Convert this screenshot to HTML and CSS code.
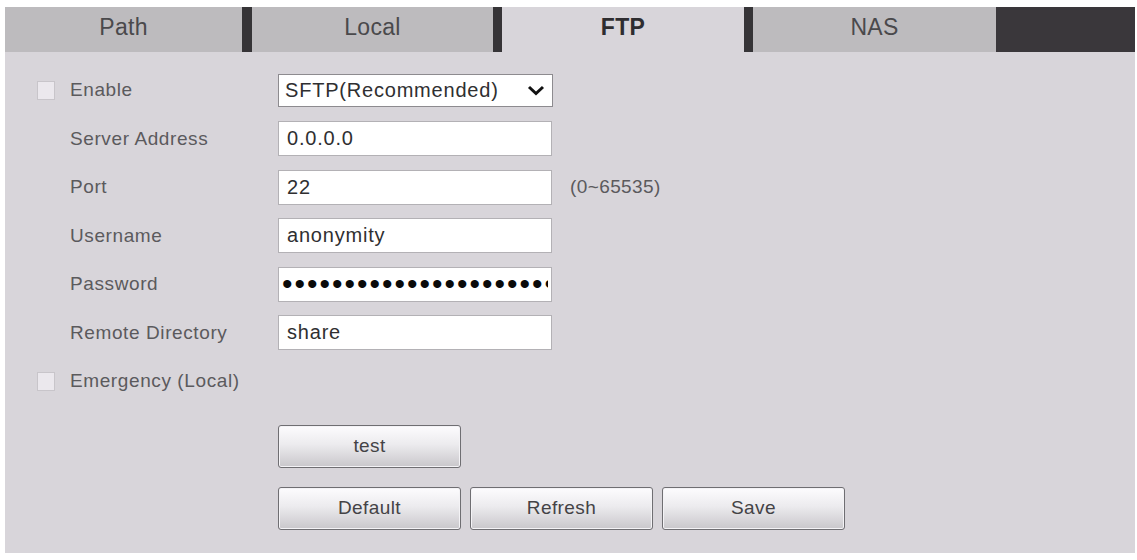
FILE: index.html
```html
<!DOCTYPE html>
<html>
<head>
<meta charset="utf-8">
<link rel="stylesheet" href="styles.css">
</head>
<body>
<div class="panel">
  <div class="tabs">
    <div class="tab tab-path">Path</div>
    <div class="tab tab-local">Local</div>
    <div class="tab tab-ftp active">FTP</div>
    <div class="tab tab-nas">NAS</div>
    <div class="tab-fill"></div>
  </div>
  <div class="form">
    <div class="row">
      <span class="cb"></span>
      <span class="label">Enable</span>
      <div class="select-wrap">
        <select class="field select"><option>SFTP(Recommended)</option></select>
        <svg class="chev" width="18" height="11" viewBox="0 0 18 11"><path d="M2 2 L9 8.5 L16 2" fill="none" stroke="#111" stroke-width="3"/></svg>
      </div>
    </div>
    <div class="row">
      <span class="cb-space"></span>
      <span class="label">Server Address</span>
      <input class="field" type="text" value="0.0.0.0">
    </div>
    <div class="row">
      <span class="cb-space"></span>
      <span class="label">Port</span>
      <input class="field" type="text" value="22">
      <span class="hint">(0~65535)</span>
    </div>
    <div class="row">
      <span class="cb-space"></span>
      <span class="label">Username</span>
      <input class="field" type="text" value="anonymity">
    </div>
    <div class="row">
      <span class="cb-space"></span>
      <span class="label">Password</span>
      <input class="field pwd" type="password" value="passwordpasswordpasswordpassword">
    </div>
    <div class="row">
      <span class="cb-space"></span>
      <span class="label">Remote Directory</span>
      <input class="field" type="text" value="share">
    </div>
    <div class="row">
      <span class="cb"></span>
      <span class="label">Emergency (Local)</span>
    </div>
    <div class="btn-row first">
      <button class="btn">test</button>
    </div>
    <div class="btn-row">
      <button class="btn">Default</button>
      <button class="btn">Refresh</button>
      <button class="btn">Save</button>
    </div>
  </div>
</div>
</body>
</html>
```
FILE: styles.css
```css
html, body {
  margin: 0;
  padding: 0;
  background: #ffffff;
}
body {
  font-family: "Liberation Sans", Arial, sans-serif;
}
.panel {
  margin: 7px 2px 0 5px;
  height: 546px;
  background: #d8d5da;
  display: flex;
  flex-direction: column;
}
.tabs {
  display: flex;
  height: 45px;
  flex: none;
}
.tab {
  box-sizing: border-box;
  background: #bdbbbe;
  color: #4a494c;
  font-size: 23px;
  letter-spacing: 0.3px;
  text-align: center;
  line-height: 40px;
  height: 45px;
}
.tab-path { width: 247px; border-right: 10px solid #363437; }
.tab-local { width: 250px; border-right: 9px solid #363437; }
.tab-ftp { width: 251px; border-right: 9px solid #363437; }
.tab-nas { width: 243px; }
.tab.active {
  background: #d8d5da;
  color: #2e2d30;
  font-weight: bold;
  font-size: 23px;
}
.tab-fill {
  flex: 1;
  background: #3a373b;
}
.form {
  padding: 14px 0 0 32px;
  display: flex;
  flex-direction: column;
}
.row {
  height: 48.5px;
  display: flex;
  align-items: center;
}
.cb, .cb-space {
  width: 18px;
  height: 19px;
  margin-right: 15px;
  flex: none;
  box-sizing: border-box;
}
.cb {
  background: #ebe8ed;
  border: 1px solid #c8c5ca;
}
.label {
  width: 208px;
  flex: none;
  font-size: 19px;
  letter-spacing: 0.6px;
  color: #5b5a5d;
}
.field {
  box-sizing: border-box;
  width: 274px;
  height: 35px;
  margin: 0;
  border: 1px solid #b3b1b5;
  background: #ffffff;
  font-family: "Liberation Sans", Arial, sans-serif;
  font-size: 20px;
  letter-spacing: 0.8px;
  color: #2f2f31;
  padding: 0 8px;
  outline: none;
  border-radius: 0;
}
.pwd {
  font-size: 30px;
  letter-spacing: 2px;
  padding: 0 3px;
  color: #0a0a0a;
}
.select-wrap {
  position: relative;
  width: 275px;
  height: 33px;
}
.select {
  -webkit-appearance: none;
  appearance: none;
  width: 275px;
  height: 33px;
  border: 1px solid #8d8b8f;
  padding: 0 6px;
}
.chev {
  position: absolute;
  right: 8px;
  top: 11px;
  pointer-events: none;
}
.hint {
  margin-left: 18px;
  font-size: 19px;
  letter-spacing: 0.4px;
  color: #5b5a5d;
}
.btn-row {
  display: flex;
  gap: 9px;
  padding-left: 241px;
  margin-top: 19px;
}
.btn-row.first {
  margin-top: 19px;
}
.btn {
  box-sizing: border-box;
  width: 183px;
  height: 43px;
  margin: 0;
  border: 1px solid #6f6e72;
  border-radius: 3px;
  background: linear-gradient(to bottom, #fdfcfe 0%, #ecebee 45%, #c9c7cb 100%);
  box-shadow: inset 0 0 0 1px #f4f3f6;
  font-family: "Liberation Sans", Arial, sans-serif;
  font-size: 19px;
  letter-spacing: 0.4px;
  color: #444346;
  padding: 0;
}
```
